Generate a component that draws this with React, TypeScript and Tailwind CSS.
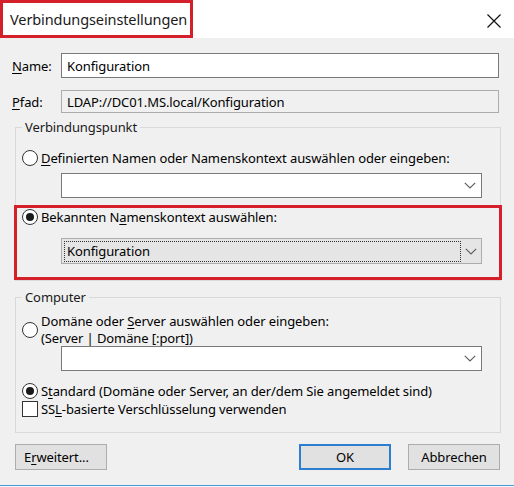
import React from "react";

const U = ({ children }: { children: React.ReactNode }) => (
  <span className="underline decoration-1 underline-offset-[2px]">{children}</span>
);

function Radio({ checked }: { checked?: boolean }) {
  return (
    <span className="w-[16px] h-[16px] rounded-full border border-[#333333] bg-white flex items-center justify-center shrink-0">
      {checked && <span className="w-[8px] h-[8px] rounded-full bg-[#1a1a1a]" />}
    </span>
  );
}

function Chevron() {
  return (
    <svg width="12" height="7" viewBox="0 0 12 7" className="shrink-0">
      <polyline points="0.8,0.8 6,6 11.2,0.8" fill="none" stroke="#606060" strokeWidth="1.2" />
    </svg>
  );
}

function Combo({ grey, text }: { grey?: boolean; text?: string }) {
  if (grey) {
    return (
      <div className="w-[421px] h-[26px] bg-[#e5e5e5] border border-[#adadad] flex items-center">
        <div className="ml-[2px] h-[21px] w-[397px] border border-dotted border-[#333333] flex items-center pl-[2px] text-black">
          {text}
        </div>
        <div className="flex-1 flex items-center justify-center pt-[1px]">
          <Chevron />
        </div>
      </div>
    );
  }
  return (
    <div className="w-[421px] h-[25px] bg-white border border-[#7a7a7a] flex items-center justify-end pr-[5px]">
      <Chevron />
    </div>
  );
}

export default function App() {
  return (
    <div className="w-[514px] h-[487px] bg-[#f0f0f0] overflow-hidden flex flex-col font-['Noto_Sans',sans-serif] text-[13px] tracking-[-0.1px] leading-[18px] text-black">
      {/* Title bar */}
      <div className="h-[38px] bg-white flex items-center justify-between shrink-0">
        <div className="w-[193px] h-[38px] border-[3px] border-[#d3202b] flex items-center pl-[7px] text-[14.5px] tracking-[-0.1px] text-[#1a1a1a]">
          Verbindungseinstellungen
        </div>
        <div className="mr-[13px] mt-[3px]">
          <svg width="14" height="14" viewBox="0 0 14 14">
            <path d="M0.5 0.5 L13.5 13.5 M13.5 0.5 L0.5 13.5" stroke="#111" strokeWidth="1.2" />
          </svg>
        </div>
      </div>

      {/* Name row */}
      <div className="flex items-center mt-[15px] h-[25px]">
        <div className="w-[61px] pl-[12px]">
          <U>N</U>ame:
        </div>
        <div className="w-[438px] h-[25px] bg-white border border-[#7a7a7a] flex items-center pl-[5px]">
          Konfiguration
        </div>
      </div>

      {/* Pfad row */}
      <div className="flex items-center mt-[12px] h-[23px]">
        <div className="w-[61px] pl-[12px]">
          <U>P</U>fad:
        </div>
        <div className="w-[438px] h-[23px] bg-[#f0f0f0] border border-[#adadad] flex items-center pl-[5px]">
          LDAP://DC01.MS.local/Konfiguration
        </div>
      </div>

      {/* Group 1 */}
      <fieldset className="ml-[15px] w-[486px] mt-[5px] border border-[#d9d9d9] flex flex-col">
        <legend className="ml-[6px] px-[3px] text-[#1a1a1a]">Verbindungspunkt</legend>
        <div className="mt-[13px] h-[18px] flex items-center pl-[6px] gap-[3px]">
          <Radio />
          <span>
            <U>D</U>efinierten Namen oder Namenskontext auswählen oder eingeben:
          </span>
        </div>
        <div className="mt-[6px] ml-[45px]">
          <Combo />
        </div>
        <div className="mt-[7px] -mx-[2px] h-[75px] border-[3px] border-[#d3202b] flex flex-col">
          <div className="h-[18px] flex items-center pl-[5px] gap-[3px]">
            <Radio checked />
            <span>
              Bekannten N<U>a</U>menskontext auswählen:
            </span>
          </div>
          <div className="mt-[12px] ml-[44px]">
            <Combo grey text="Konfiguration" />
          </div>
        </div>
      </fieldset>

      {/* Group 2 */}
      <fieldset className="ml-[15px] w-[486px] mt-[7px] border border-[#d9d9d9] flex flex-col">
        <legend className="ml-[6px] px-[3px] text-[#1a1a1a]">Computer</legend>
        <div className="mt-[7px] flex items-center pl-[6px] gap-[3px]">
          <Radio />
          <div className="flex flex-col leading-[17px]">
            <span>
              Domäne oder <U>S</U>erver auswählen oder eingeben:
            </span>
            <span>(Server | Domäne [:port])</span>
          </div>
        </div>
        <div className="-mt-[1px] ml-[45px]">
          <Combo />
        </div>
        <div className="mt-[11px] h-[18px] flex items-center pl-[6px] gap-[3px]">
          <Radio checked />
          <span>
            S<U>t</U>andard (Domäne oder Server, an der/dem Sie angemeldet sind)
          </span>
        </div>
        <div className="h-[18px] flex items-center pl-[6px] gap-[3px]">
          <span className="w-[16px] h-[16px] border border-[#333333] bg-white shrink-0" />
          <span>
            SS<U>L</U>-basierte Verschlüsselung verwenden
          </span>
        </div>
        <div className="h-[14px]" />
      </fieldset>

      {/* Buttons */}
      <div className="mt-[11px] flex items-center h-[26px]">
        <button className="ml-[15px] w-[92px] h-[26px] bg-[#e1e1e1] border border-[#adadad] flex items-center pl-[8px]">
          E<U>r</U>weitert...
        </button>
        <button className="ml-[192px] w-[92px] h-[26px] bg-[#e1e1e1] border-2 border-[#2b7fd0] flex items-center justify-center">
          OK
        </button>
        <button className="ml-[17px] w-[92px] h-[26px] bg-[#e1e1e1] border border-[#adadad] flex items-center justify-center">
          Abbrechen
        </button>
      </div>

      <div className="mt-[15px] h-[1px] bg-[#4a9ad8]" />
      <div className="flex-1 bg-[#f4f7fa]" />
    </div>
  );
}
